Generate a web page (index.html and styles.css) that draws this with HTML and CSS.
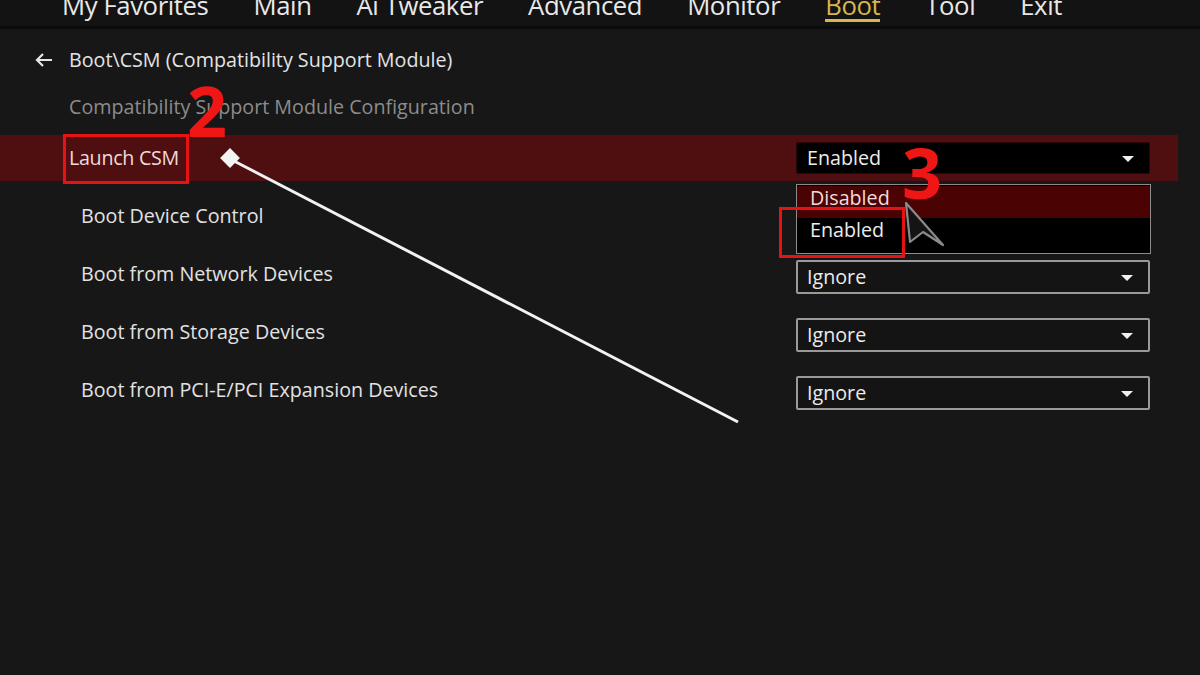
FILE: index.html
```html
<!DOCTYPE html>
<html>
<head>
<meta charset="utf-8">
<link rel="stylesheet" href="styles.css">
</head>
<body>
<div class="screen">
  <nav class="nav">
    <span class="tab">My Favorites</span>
    <span class="tab">Main</span>
    <span class="tab">Ai Tweaker</span>
    <span class="tab">Advanced</span>
    <span class="tab">Monitor</span>
    <span class="tab active">Boot</span>
    <span class="tab">Tool</span>
    <span class="tab">Exit</span>
  </nav>
  <main class="content">
    <div class="crumb">
      <svg class="back" width="20" height="16" viewBox="0 0 20 16"><path d="M18 8H3M9 2L3 8l6 6" fill="none" stroke="#e6e6e6" stroke-width="2.2"/></svg>
      <span>Boot\CSM (Compatibility Support Module)</span>
    </div>
    <div class="subtitle">Compatibility Support Module Configuration</div>
    <div class="rows">
      <div class="row selected">
        <span class="label top">Launch CSM</span>
        <div class="select sel-active"><span>Enabled</span><i class="caret"></i></div>
      </div>
      <div class="row">
        <span class="label">Boot Device Control</span>
      </div>
      <div class="row">
        <span class="label">Boot from Network Devices</span>
        <div class="select"><span>Ignore</span><i class="caret"></i></div>
      </div>
      <div class="row">
        <span class="label">Boot from Storage Devices</span>
        <div class="select"><span>Ignore</span><i class="caret"></i></div>
      </div>
      <div class="row">
        <span class="label">Boot from PCI-E/PCI Expansion Devices</span>
        <div class="select"><span>Ignore</span><i class="caret"></i></div>
      </div>
    </div>
  </main>

  <div class="dropdown">
    <div class="opt hot">Disabled</div>
    <div class="opt">Enabled</div>
  </div>

  <svg class="overlay" width="1200" height="675" viewBox="0 0 1200 675">
    <line x1="232" y1="160" x2="738" y2="422" stroke="#f2f2f2" stroke-width="3"/>
    <rect x="223" y="151" width="14" height="14" fill="#f4f4f4" transform="rotate(45 230 158)"/>
    <path d="M906 203 L910 242 L923 232 L943 245 Z" fill="#141414" stroke="#8a8a8a" stroke-width="2.2" stroke-linejoin="round"/>
  </svg>

  <div class="mark mark-launch"></div>
  <div class="mark mark-enabled"></div>
  <div class="num num2">2</div>
  <div class="num num3">3</div>
</div>
</body>
</html>
```

FILE: styles.css
```css
* { box-sizing: border-box; }
html, body { margin: 0; padding: 0; }
body {
  width: 1200px;
  height: 675px;
  overflow: hidden;
  background: #171717;
  font-family: "Open Sans", "Noto Sans", sans-serif;
}
.screen {
  position: relative;
  width: 1200px;
  height: 675px;
  background: #171717;
}
.nav {
  height: 29px;
  background: #131313;
  border-bottom: 3px solid #0b0b0b;
  display: flex;
  gap: 45px;
  padding-left: 62px;
  overflow: hidden;
}
.tab {
  font-size: 25.7px;
  line-height: 26px;
  margin-top: -7px;
  color: #e8e8e8;
  letter-spacing: -0.4px;
  height: 29px;
  white-space: nowrap;
}
.tab.active {
  color: #d8b54e;
  position: relative;
}
.tab.active::after {
  content: "";
  position: absolute;
  left: 0;
  right: 0;
  top: 26px;
  height: 3px;
  background: #d8b54e;
}
.content {
  padding-top: 17px;
}
.crumb {
  display: flex;
  align-items: center;
  gap: 15px;
  padding-left: 34px;
  height: 28px;
  font-size: 19.7px;
  color: #e4e4e4;
}
.crumb span { margin-top: -2px; }
.back { display: block; }
.subtitle {
  margin-top: 19px;
  padding-left: 69px;
  height: 28px;
  line-height: 28px;
  font-size: 19.7px;
  color: #8c8c8c;
}
.rows {
  margin-top: 14px;
  display: flex;
  flex-direction: column;
}
.row {
  height: 58px;
  display: flex;
  align-items: center;
  justify-content: space-between;
  padding-right: 50px;
  padding-left: 81px;
}
.row.selected {
  height: 46px;
  background: #4f0f10;
  margin-right: 22px;
  padding-left: 69px;
  padding-right: 28px;
  margin-bottom: 6px;
}
.label {
  font-size: 19.7px;
  color: #e2e2e2;
  margin-top: -2px;
}
.label.top { color: #f0dada; letter-spacing: -0.3px; }
.select {
  width: 354px;
  height: 34px;
  margin-top: 6px;
  border: 2px solid #9a9a9a;
  border-radius: 2px;
  background: #141414;
  display: flex;
  align-items: center;
  justify-content: space-between;
  padding: 0 15px 0 9px;
  font-size: 19.7px;
  color: #ececec;
}
.select span { margin-top: -2px; }
.select.sel-active {
  height: 32px;
  margin-top: 0;
  background: #000;
  border: 1px solid #2a0607;
  padding-left: 10px;
}
.caret {
  width: 0;
  height: 0;
  border-left: 6px solid transparent;
  border-right: 6px solid transparent;
  border-top: 6px solid #f0f0f0;
  margin-top: 1px;
}
.dropdown {
  position: absolute;
  left: 796px;
  top: 184px;
  width: 355px;
  height: 70px;
  border: 1px solid #8c8c8c;
  background: #000;
  padding-top: 1px;
}
.opt {
  height: 32px;
  line-height: 24px;
  padding-left: 13px;
  font-size: 19.7px;
  color: #ececec;
}
.opt.hot {
  background: #4a0203;
  color: #f2dcdc;
}
.overlay {
  position: absolute;
  left: 0;
  top: 0;
  pointer-events: none;
}
.mark {
  position: absolute;
  border: 3px solid #e51313;
}
.mark-launch { left: 63px; top: 134px; width: 126px; height: 50px; }
.mark-enabled { left: 779px; top: 207px; width: 126px; height: 51px; }
.num {
  position: absolute;
  color: #f01616;
  font-family: "Open Sans", sans-serif;
  font-weight: 700;
  font-size: 70px;
  line-height: 70px;
}
.num2 { left: 187px; top: 75px; }
.num3 { left: 902px; top: 137px; }
```
